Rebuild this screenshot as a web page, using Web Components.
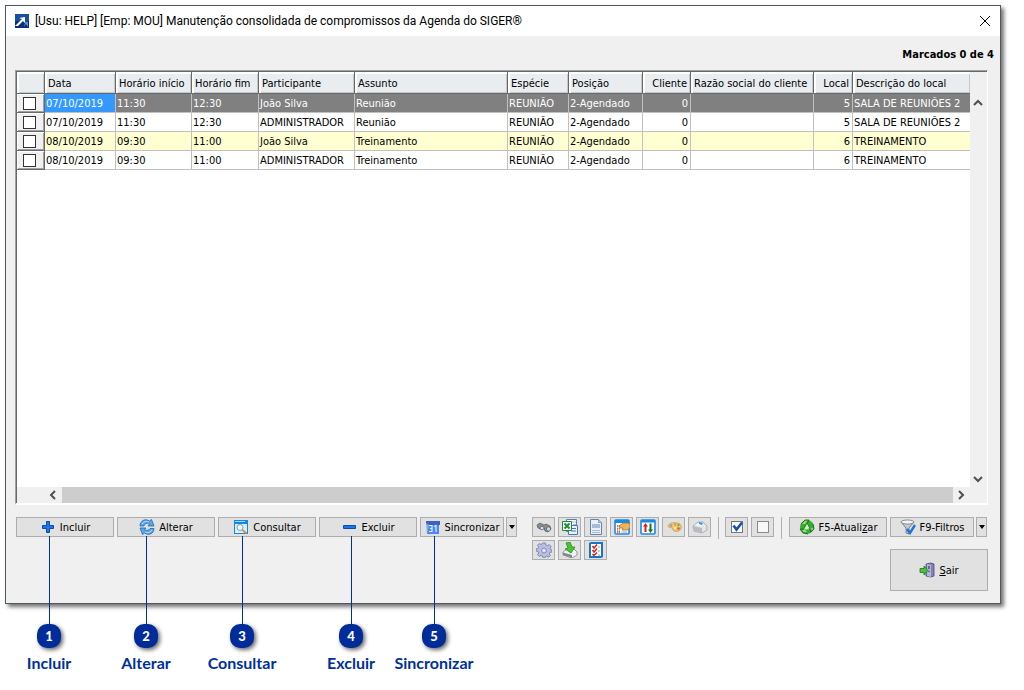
<!DOCTYPE html>
<html lang="pt-BR">
<head>
<meta charset="utf-8">
<title>Manutenção consolidada de compromissos da Agenda do SIGER</title>
<style>
    body {
        margin: 0;
        background: #fff;
        color: #000;
        font-family: "DejaVu Sans Condensed", "DejaVu Sans", sans-serif;
        font-size: 11px;
        line-height: 14px;
    }
</style>
</head>
<body>
<agenda-page></agenda-page>

<script>
const icons = {
    logo: `<path fill="#1c4ea0" d="M1 1h14v14H1z"/><path fill="#0b2f78" d="M1 8h14v7H1z"/><path fill="#5a8ad0" d="M9 8l5 1v5l-2-3-2 3 1-4z"/><path fill="#fff" d="M2 12l6-6-3-1 6-1 0 6-2-2-5 5H1z"/>`,
    plus: `<path fill="#1b76e8" stroke="#0a4cb0" d="M6.500 2.500h3v4h4v3h-4v4h-3v-4h-4v-3h4z"/>`,
    minus: `<path fill="#1478ee" stroke="#0a4cb0" d="M2.500 6.500h12v3h-12z"/>`,
    refresh: `<path fill="#5aa6ea" stroke="#1c68b4" stroke-width=".8" d="M1 7c0-5 5-8 9.500-5l2-1.500 2.500 6.500H9l1.500-2C8 3.500 6 4.500 5 7z"/><path fill="#5aa6ea" stroke="#1c68b4" stroke-width=".8" d="M15 9.500c0 5-5 7.500-9.500 4.500l-2 1.500L1 9h6l-1.500 2c2.500 1 4.500 0 5.500-1.500z"/><path stroke="#c5e4fc" d="M3 5c2-3 5-3 7-2M13 11c-2 3-5 3-7 2"/>`,
    consult: `<rect x="1.500" y="1.500" width="13" height="13" fill="#d9effd" stroke="#1586e0"/><path fill="#1586e0" d="M1 1h14v4H1z"/><path fill="#9bdcff" d="M2 2h10v1H2z"/><circle cx="7" cy="8.500" r="3" fill="#eef9ff" stroke="#7b9db4"/><path stroke="#e58a26" stroke-width="2" d="M9.500 11l4 3.500"/>`,
    calendar: `<path fill="#3a62c0" d="M1 2h14v4H1z"/><path fill="#4e88ee" d="M2 6h12v9H2z"/><path fill="#80aaf6" d="M1 4l1 11 2-9z"/><path fill="none" stroke="#e0ecff" stroke-width="1.200" d="M4 6.500h3v6H4M5 9.500h2M9 7.500l2-1v6.500"/>`,
    binoculars: `<path fill="#8b8e90" stroke="#4f5558" stroke-width=".7" d="M1 6l3-2 4 2 2-1 4 2 1 3-3 3-3-1-1-3-2 0-1 1-3-1z"/><ellipse cx="6" cy="9" rx="2" ry="1.800" fill="#c4e2f6" stroke="#555" stroke-width=".7"/><ellipse cx="12.500" cy="10" rx="2" ry="2.200" fill="#c4e2f6" stroke="#555" stroke-width=".7"/>`,
    excel: `<path fill="#fff" stroke="#5580b8" d="M4.500.5h10v12h-10z"/><path stroke="#9dbce0" d="M10 3h4M11 5.500h3"/><path fill="#eaf2ff" stroke="#4479bd" d="M6.500 6.500h9v9h-9z"/><path stroke="#4479bd" d="M9 12h5M9 9.500h5"/><path fill="#f4faf4" stroke="#238a3a" d="M.5 2.500h9v9h-9z"/><path stroke="#238a3a" stroke-width="2" d="M2.500 4.500l5 5M7.500 4.500l-5 5"/>`,
    page: `<path fill="#eaf0fa" stroke="#6982aa" d="M2.500.5h8l3 3v12h-11z"/><path fill="#bccbe5" stroke="#6982aa" stroke-width=".7" d="M10.500.5v3h3"/><path fill="#a6badc" d="M4 5h8v4H4z"/><path stroke="#a6badc" d="M4 11.500h8M4 13.500h8"/>`,
    gridHand: `<rect x="1" y="1" width="14" height="14" rx="1" fill="#fff" stroke="#168ae6" stroke-width="1.600"/><path fill="#168ae6" d="M1 1h14v3H1z"/><path fill="#ea6633" d="M3 6h3v8H3z"/><path fill="#b7d4f0" d="M7 12h6v2H7z"/><path stroke="#fff" stroke-width=".7" d="M2 8.500h12M2 11h12M8 5v9M4.500 5v9"/><path fill="#eeb45c" stroke="#a86720" stroke-width=".7" d="M5 7l4-3h5l2 1v4l-3 2H8l1-2-3 0z"/>`,
    sort: `<rect x="1" y="1" width="14" height="14" rx="1" fill="#fff" stroke="#168ae6" stroke-width="1.600"/><path fill="#168ae6" d="M1 1h14v2.500H1z"/><path fill="#e01c1c" d="M5.500 4L8 7.500H6.500V13h-2V7.500H3z"/><path fill="#087832" d="M10.500 14L8 10.500h1.500V4.500h2v6H13z"/>`,
    palette: `<path fill="#f0c86c" stroke="#be9553" stroke-width=".7" d="M2 7c1-3 5-4 9-3 4 0 5 4 4 6s-4 3-7 2c-2-1 0-2-2-3S2 9 2 7z"/><circle cx="5" cy="6.500" r="1.200" fill="#a493bb"/><circle cx="9" cy="5.500" r="1.100" fill="#ed8545"/><circle cx="12.500" cy="6" r="1.200" fill="#62b948"/><circle cx="12.500" cy="9.500" r="1.200" fill="#e05050"/><circle cx="9" cy="9" r="1" fill="#fff4c4"/>`,
    printer: `<path fill="#e3e5e7" stroke="#96999d" stroke-width=".7" d="M1 7l5-4h5l4 4v4l-5 3-8-2z"/><path fill="#b8bbc0" d="M1 7l9 2v5l-8-2z"/><path fill="#f8f8f8" d="M3 6l4-2 5 1-3 3z"/><path fill="#3c9ae5" d="M7 3l4 1-1 2-3-1z"/>`,
    check: `<rect x="2.500" y="2.500" width="11" height="11" fill="#fff" stroke="#777"/><path fill="none" stroke="#1650b8" stroke-width="2.600" d="M4.500 6.500l3 4L13 3.500"/>`,
    uncheck: `<rect x="2.500" y="2.500" width="11" height="11" fill="#f7f7f7" stroke="#888"/>`,
    gear: `<g fill="#b9bedf" stroke="#7477ac" stroke-width=".8"><path d="M6.500 1h3l.4 2 1.600.7 1.700-1.200 2 2-1.100 1.700.6 1.600L16 8v2l-2 .4-.7 1.600 1.100 1.700-1.800 1.500-1.700-1.100-1.500.6L9 16H7l-.5-2-1.500-.6-1.700 1.100-1.800-1.800L2.600 11 2 9.500 0 9V7l2-.5.7-1.500L1.500 3.300l1.800-1.800L5 2.600l1-.6z"/><circle cx="8" cy="8.500" r="2.400" fill="#e4e4ee"/></g>`,
    export: `<path fill="#f2f3f4" stroke="#777" stroke-width=".7" d="M1 10l4-3h7l3 3v3l-5 3-9-3z"/><path fill="#85888c" d="M1 10.500l9 2.500v3l-9-3z"/><path fill="#49c531" stroke="#17821a" stroke-width=".7" d="M4 1l4-1 2 5h3l-4 6-6-4 3-1z"/>`,
    list: `<path fill="#1676c8" d="M1 1l2-1h12v15l-2 1H1z"/><path fill="#fff" d="M3 2h10v12H3z"/><path fill="none" stroke="#d52020" stroke-width="1.500" d="M4.500 4l1.500 2L9 2.500M4.500 8L6 10l3-3.500M4.500 12L6 13.500l3-3"/><path stroke="#999" d="M10 5h2M10 9h2M10 13h2"/>`,
    recycle: `<circle cx="8" cy="8" r="5" fill="#2f8f2f" stroke="#38ae32" stroke-width="4"/><path fill="#d8ecd4" d="M8 5l3 5.500H5z"/><path fill="none" stroke="#176c1b" stroke-width=".9" d="M2 5l4-4h4l-2 4M14 5l1 5-3 3-2-4M9 15l-5-1-3-4 4 0"/><path fill="#9be76a" d="M3 5l3-3h2L6 5zM12 9h2l-1 3zM3 11h3l2 2H5z"/>`,
    filter: `<path fill="#c5cbce" stroke="#646b70" stroke-width=".8" d="M1 3l5 6v5l3 1V9l5-6z"/><ellipse cx="7.500" cy="3" rx="6.500" ry="2" fill="#f4f4f4" stroke="#777" stroke-width=".8"/><path fill="none" stroke="#1975dc" stroke-width="2.400" d="M7 10l3 4 5-8"/>`,
    exit: `<path fill="#8580b3" stroke="#4c466f" stroke-width=".8" d="M7 2l5-1 3 1v12l-3 1-5-1z"/><path fill="#b6b4d8" d="M8 2l4 1v12l-4-1z"/><path fill="#6b6797" d="M9 4h2v3H9zM9 9h2v1H9z"/><path fill="#49c43a" stroke="#18791c" stroke-width=".8" d="M1 6.500h4V4l4 4.500L5 13v-2.500H1z"/>`
};

const icon = (name, size = 16) =>
    `<svg width="${size}" height="${size}" viewBox="0 0 16 16" aria-hidden="true" fill="none">${icons[name]}</svg>`;

class ToolButton extends HTMLElement {
    constructor() {
        super();
        const shadowRoot = this.attachShadow({mode: 'open'});
        const name = this.getAttribute('icon');
        const label = this.getAttribute('label');
        shadowRoot.innerHTML = `
            <style>${ToolButton.styles}</style>
            <button type="button" ${label ? `aria-label="${label}"` : ''}>
                ${name ? icon(name) : ''}<span><slot></slot></span>
            </button>
        `;
    }

    static get styles() {
        return `
            :host {
                display: block;
                flex: none;
                width: 98px;
                height: 20px;
            }

            :host([split]) {
                width: 84px;
            }

            :host([small]) {
                width: 23px;
            }

            :host([arrow]) {
                width: 11px;
            }

            :host([large]) {
                height: 42px;
            }

            button {
                box-sizing: border-box;
                width: 100%;
                height: 100%;
                display: flex;
                align-items: center;
                justify-content: center;
                gap: 4px;
                padding: 0;
                border: 1px solid #adadad;
                background: #e1e1e1;
                color: inherit;
                font: inherit;
                white-space: nowrap;
            }

            span {
                padding-top: 2px;
            }

            :host([small]) span,
            :host([arrow]) span {
                display: none;
            }

            :host([arrow]) button::before {
                content: "";
                border: 3px solid transparent;
                border-top: 4px solid #000;
                border-bottom: 0;
            }

            svg {
                flex: none;
            }
        `;
    }
}

class ScrollBar extends HTMLElement {
    constructor() {
        super();
        const shadowRoot = this.attachShadow({mode: 'open'});
        const vertical = this.hasAttribute('vertical');
        const paths = vertical ? ['M4 10l4-4 4 4', 'M4 6l4 4 4-4'] : ['M10 4l-4 4 4 4', 'M6 4l4 4-4 4'];
        const names = vertical ? ['Acima', 'Abaixo'] : ['Esquerda', 'Direita'];
        const arrow = i => `
            <button type="button" aria-label="${names[i]}">
                <svg width="16" height="16" fill="none" stroke="#505050" stroke-width="2"><path d="${paths[i]}"/></svg>
            </button>`;
        shadowRoot.innerHTML = `
            <style>${ScrollBar.styles}</style>
            ${arrow(0)}<div class="thumb"></div>${arrow(1)}
        `;
    }

    static get styles() {
        return `
            :host {
                display: flex;
                background: #f0f0f0;
            }

            :host([vertical]) {
                flex-direction: column;
            }

            button {
                flex: none;
                width: 17px;
                height: 16px;
                padding: 0;
                border: 0;
                background: none;
            }

            svg {
                display: block;
            }

            .thumb {
                flex: 1;
                background: #cdcdcd;
            }

            :host([vertical]) .thumb {
                background: none;
            }
        `;
    }
}

class AgendaGrid extends HTMLElement {
    constructor() {
        super();
        const shadowRoot = this.attachShadow({mode: 'open'});
        const columns = AgendaGrid.columns;
        const cls = i => columns[i][2] ? 'class="num"' : '';
        shadowRoot.innerHTML = `
            <style>${AgendaGrid.styles}</style>
            <div class="view">
                <table>
                    <colgroup><col style="width: 28px">${columns.map(c => `<col ${c[1] ? `style="width: ${c[1]}px"` : ''}>`).join('')}</colgroup>
                    <thead>
                        <tr><th></th>${columns.map((c, i) => `<th ${cls(i)}>${c[0]}</th>`).join('')}</tr>
                    </thead>
                    <tbody>
                        ${AgendaGrid.rows.map((row, n) => `
                            <tr class="${['selected', '', 'alt', ''][n]}">
                                <td class="pick"><input type="checkbox" aria-label="Marcar compromisso ${n + 1}"></td>
                                ${row.map((v, i) => `<td ${cls(i)}>${v}</td>`).join('')}
                            </tr>`).join('')}
                    </tbody>
                </table>
            </div>
            <scroll-bar vertical></scroll-bar>
            <scroll-bar class="bottom"></scroll-bar>
            <div class="corner"></div>
        `;
    }

    // título, largura, alinhado à direita
    static get columns() {
        return [
            ['Data', 71],
            ['Horário início', 76],
            ['Horário fim', 67],
            ['Participante', 96],
            ['Assunto', 153],
            ['Espécie', 61],
            ['Posição', 74],
            ['Cliente', 48, true],
            ['Razão social do cliente', 123],
            ['Local', 39, true],
            ['Descrição do local']
        ];
    }

    static get rows() {
        return [
            ['07/10/2019', '11:30', '12:30', 'João Silva', 'Reunião', 'REUNIÃO', '2-Agendado', '0', '', '5', 'SALA DE REUNIÕES 2'],
            ['07/10/2019', '11:30', '12:30', 'ADMINISTRADOR', 'Reunião', 'REUNIÃO', '2-Agendado', '0', '', '5', 'SALA DE REUNIÕES 2'],
            ['08/10/2019', '09:30', '11:00', 'João Silva', 'Treinamento', 'REUNIÃO', '2-Agendado', '0', '', '6', 'TREINAMENTO'],
            ['08/10/2019', '09:30', '11:00', 'ADMINISTRADOR', 'Treinamento', 'REUNIÃO', '2-Agendado', '0', '', '6', 'TREINAMENTO']
        ];
    }

    static get styles() {
        return `
            :host {
                display: grid;
                grid-template: 1fr 16px / 1fr 17px;
                border: 1px solid #a0a0a0;
                border-right-color: #fff;
                border-bottom: 2px solid #fff;
            }

            .view {
                border-top: 1px solid #696969;
                border-left: 1px solid #696969;
                background: #fff;
            }

            scroll-bar[vertical] {
                border-top: 1px solid #696969;
                padding-top: 23px;
            }

            .bottom {
                border-left: 1px solid #696969;
                padding-left: 28px;
            }

            .bottom,
            .corner {
                background: #f0f0f0;
            }

            table {
                width: 100%;
                table-layout: fixed;
                border-collapse: separate;
                border-spacing: 0;
            }

            th, td {
                box-sizing: border-box;
                overflow: hidden;
                white-space: nowrap;
                text-align: left;
                font-weight: normal;
            }

            th {
                height: 22px;
                padding: 2px 3px 0;
                border: 1px solid #696969;
                border-width: 0 1px 1px 0;
                background: #e9edf0;
                box-shadow: inset 2px 2px #fff, inset -1px -1px #c4c8ca;
            }

            td {
                height: 19px;
                padding: 2px 2px 0 1px;
                border: 1px solid #c0c0c0;
                border-width: 0 1px 1px 0;
            }

            th:last-child, td:last-child {
                border-right: 0;
            }

            .num {
                text-align: right;
            }

            .selected td {
                background: #808080;
                color: #fff;
            }

            .selected td:nth-child(2) {
                background: #3399ff;
            }

            .alt td {
                background: #ffffd2;
            }

            tr td.pick {
                padding: 0 0 0 6px;
                border-color: #696969;
                background: #f0f0f0;
                box-shadow: inset 1px 1px #fff, inset -1px -1px #a0a0a0;
            }

            input {
                appearance: none;
                display: block;
                box-sizing: border-box;
                width: 13px;
                height: 13px;
                margin: 0;
                border: 1px solid #333;
                background: #fff;
            }
        `;
    }
}

class SigerWindow extends HTMLElement {
    constructor() {
        super();
        const shadowRoot = this.attachShadow({mode: 'open'});
        shadowRoot.innerHTML = `
            <style>${SigerWindow.styles}</style>
            <header>
                ${icon('logo')}
                <h1><slot name="title"></slot></h1>
                <button type="button" aria-label="Fechar">
                    <svg width="12" height="12" stroke="#000" fill="none"><path d="M1 1l10 10M11 1L1 11"/></svg>
                </button>
            </header>
            <main><slot></slot></main>
        `;
    }

    static get styles() {
        return `
            :host {
                display: flex;
                flex-direction: column;
                border: 1px solid #50585e;
                background: #f0f0f0;
                box-shadow: 3px 3px 4px rgba(0, 0, 0, .55);
            }

            header {
                display: flex;
                align-items: center;
                gap: 5px;
                height: 30px;
                padding: 0 9px 0 8px;
                background: #fff;
            }

            h1 {
                flex: 1;
                margin: 0;
                font: 12px/16px Roboto, sans-serif;
            }

            header button {
                padding: 0;
                border: 0;
                background: none;
            }

            header button svg {
                display: block;
            }

            main {
                flex: 1;
                display: flex;
                flex-direction: column;
                padding: 0 12px 12px 9px;
            }
        `;
    }
}

class CallOut extends HTMLElement {
    constructor() {
        super();
        const shadowRoot = this.attachShadow({mode: 'open'});
        shadowRoot.innerHTML = `
            <style>${CallOut.styles}</style>
            <i></i>
            <b>${this.getAttribute('number')}</b>
            <span><slot></slot></span>
        `;
    }

    static get styles() {
        return `
            :host {
                display: flex;
                flex-direction: column;
                align-items: center;
                width: 100px;
                color: #00309c;
                font: bold 16px/20px Lato, sans-serif;
            }

            i {
                width: 1px;
                height: 88px;
                background: #00309c;
            }

            b {
                width: 24px;
                height: 24px;
                margin-bottom: 5px;
                border-radius: 10px;
                background: #002c9a;
                box-shadow: 2px 2px 4px rgba(0, 0, 0, .6);
                color: #fff;
                font-size: 13px;
                line-height: 24px;
                text-align: center;
            }
        `;
    }
}

class AgendaPage extends HTMLElement {
    constructor() {
        super();
        const shadowRoot = this.attachShadow({mode: 'open'});
        shadowRoot.innerHTML = `
            <style>${AgendaPage.styles}</style>
            <siger-window>
                <span slot="title">[Usu: HELP] [Emp: MOU] Manutenção consolidada de compromissos da Agenda do SIGER®</span>
                <div class="count">Marcados 0 de 4</div>
                <agenda-grid></agenda-grid>
                <div class="toolbar">
                    <div class="group">
                        <tool-button icon="plus">Incluir</tool-button>
                        <tool-button icon="refresh">Alterar</tool-button>
                        <tool-button icon="consult">Consultar</tool-button>
                        <tool-button icon="minus">Excluir</tool-button>
                        <div class="split">
                            <tool-button split icon="calendar">Sincronizar</tool-button>
                            <tool-button arrow label="Mais opções de sincronização"></tool-button>
                        </div>
                    </div>
                    <div class="icons">
                        <tool-button small icon="binoculars" label="Localizar"></tool-button>
                        <tool-button small icon="excel" label="Exportar para Excel"></tool-button>
                        <tool-button small icon="page" label="Relatório"></tool-button>
                        <tool-button small icon="gridHand" label="Configurar colunas"></tool-button>
                        <tool-button small icon="sort" label="Ordenar"></tool-button>
                        <tool-button small icon="palette" label="Cores"></tool-button>
                        <tool-button small icon="printer" label="Imprimir"></tool-button>
                        <tool-button small icon="gear" label="Configurações"></tool-button>
                        <tool-button small icon="export" label="Salvar"></tool-button>
                        <tool-button small icon="list" label="Seleções"></tool-button>
                    </div>
                    <div class="line"></div>
                    <div class="group">
                        <tool-button small icon="check" label="Marcar todos"></tool-button>
                        <tool-button small icon="uncheck" label="Desmarcar todos"></tool-button>
                    </div>
                    <div class="line"></div>
                    <div class="actions">
                        <div class="group">
                            <tool-button icon="recycle">F5-Atuali<u>z</u>ar</tool-button>
                            <div class="split">
                                <tool-button split icon="filter">F9-Filtros</tool-button>
                                <tool-button arrow label="Mais filtros"></tool-button>
                            </div>
                        </div>
                        <tool-button large icon="exit"><u>S</u>air</tool-button>
                    </div>
                </div>
            </siger-window>
            <div class="callouts">
                <call-out number="1" style="left: -6px">Incluir</call-out>
                <call-out number="2" style="left: 91px">Alterar</call-out>
                <call-out number="3" style="left: 187px">Consultar</call-out>
                <call-out number="4" style="left: 296px">Excluir</call-out>
                <call-out number="5" style="left: 379px">Sincronizar</call-out>
            </div>
        `;
    }

    static get styles() {
        return `
            :host {
                box-sizing: border-box;
                display: flex;
                flex-direction: column;
                min-height: 100vh;
                padding: 5px 23px 0 5px;
            }

            siger-window {
                flex: 1;
            }

            .count {
                margin-right: -6px;
                padding: 12px 0 8px;
                font-weight: bold;
                text-align: right;
            }

            agenda-grid {
                flex: 1;
            }

            .toolbar {
                display: flex;
                align-items: flex-start;
                margin-top: 12px;
                padding-left: 1px;
            }

            .group {
                display: flex;
                gap: 3px;
            }

            .split {
                display: flex;
                gap: 2px;
            }

            .icons {
                display: flex;
                flex: none;
                flex-wrap: wrap;
                gap: 3px;
                width: 179px;
                margin-left: 15px;
            }

            .line {
                flex: none;
                width: 1px;
                height: 22px;
                margin: 0 6px 0 7px;
                background: #b0b0b0;
            }

            .actions {
                display: flex;
                flex-direction: column;
                align-items: flex-end;
                gap: 12px;
                margin-left: auto;
            }

            .actions .group {
                padding-right: 1px;
            }

            /* faixa abaixo da janela; as linhas sobem até os botões */
            .callouts {
                position: relative;
                height: 86px;
            }

            call-out {
                position: absolute;
                bottom: 17px;
            }
        `;
    }
}

window.customElements.define('tool-button', ToolButton);
window.customElements.define('scroll-bar', ScrollBar);
window.customElements.define('agenda-grid', AgendaGrid);
window.customElements.define('siger-window', SigerWindow);
window.customElements.define('call-out', CallOut);
window.customElements.define('agenda-page', AgendaPage);
</script>
</body>
</html>
